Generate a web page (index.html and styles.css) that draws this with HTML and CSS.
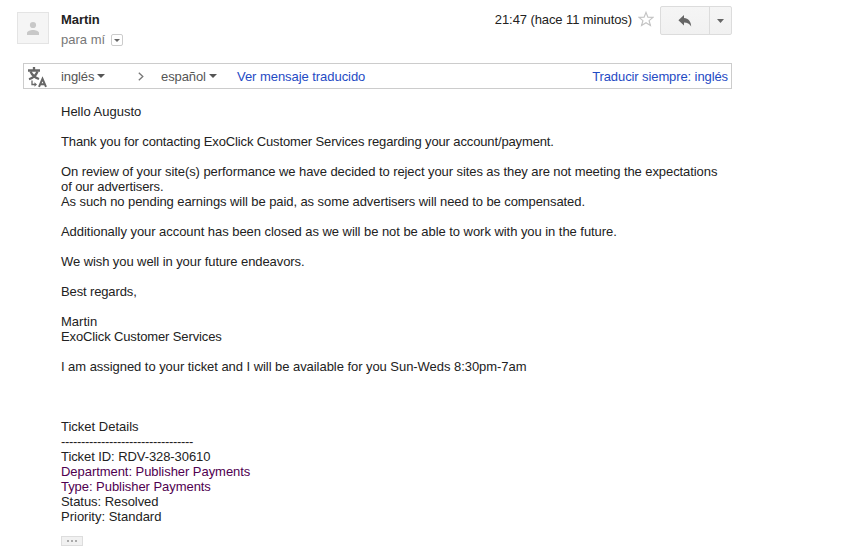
FILE: index.html
```html
<!DOCTYPE html>
<html lang="es">
<head>
    <meta charset="UTF-8">
    <title>Mensaje de Martin</title>
    <link rel="stylesheet" href="styles.css">
</head>
<body>
    <div class="message">
        <div class="header">
            <div class="avatar">
                <svg width="12" height="14" viewBox="0 0 12 14">
                    <circle cx="6" cy="4" r="3.1" fill="#c8c8c8"/>
                    <path d="M0 14V12C0 10 3.5 9 6 9s6 1 6 3v2z" fill="#c8c8c8"/>
                </svg>
            </div>
            <div class="sender">
                <div class="name">Martin</div>
                <div class="recipient">
                    <span>para mí</span>
                    <span class="details"><svg width="6" height="3" viewBox="0 0 6 3"><path d="M0 0h6L3 3z" fill="#666"/></svg></span>
                </div>
            </div>
            <div class="date">21:47 (hace 11 minutos)</div>
            <svg class="star" width="16" height="16" viewBox="0 0 16 16">
                <path d="M8 1.4l1.9 4.7 5.1.3-3.9 3.2 1.3 4.9L8 11.8l-4.4 2.7 1.3-4.9L1 6.4l5.1-.3z" fill="#fff" stroke="#c4c4c4" stroke-width="1.2"/>
            </svg>
            <div class="buttons">
                <button class="reply">
                    <svg width="14" height="12" viewBox="0 0 14 12"><path d="M6 0v3c4.500 .4 7 3.300 7.200 8.500C11.500 8.600 9.500 7.400 6 7.400V10.500L.4 5.200z" fill="#666"/></svg>
                </button>
                <button class="more">
                    <svg width="7" height="4" viewBox="0 0 7 4"><path d="M0 0h7L3.500 4z" fill="#666"/></svg>
                </button>
            </div>
        </div>

        <div class="translate">
            <svg class="translate-icon" width="20" height="22" viewBox="0 0 20 22">
                <g fill="none" stroke="#666">
                    <path d="M0 4.500H12M6 1V4.500" stroke-width="2.300"/>
                    <path d="M2.500 5.500C4 9 7 11.500 11 13M9.500 5.500C8 9.500 5 12 1 13.300" stroke-width="2.200"/>
                    <path d="M4 14.500V18.500H7" stroke-width="1.300"/>
                    <path d="M11 20.800L14.500 12.800 18 20.800M12.300 18.200H16.700" stroke-width="2"/>
                </g>
                <path d="M6.500 16.200l2.500 2.300L6.500 20.800z" fill="#666"/>
            </svg>
            <span class="lang from">inglés<i class="arrow"></i></span>
            <svg class="chevron" width="6" height="9" viewBox="0 0 6 9"><path d="M.8 .8L4.800 4.500 .8 8.200" fill="none" stroke="#777" stroke-width="1.300"/></svg>
            <span class="lang to-lang">español<i class="arrow"></i></span>
            <a class="link">Ver mensaje traducido</a>
            <a class="link always">Traducir siempre: inglés</a>
        </div>

        <div class="body">
            <span class="normal">Hello Augusto</span><br>
            <br>
            <span class="tight">Thank you for contacting ExoClick Customer Services regarding your account/payment.</span><br>
            <br>
            On review of your site(s) performance we have decided to reject your sites as they are not meeting the expectations<br>
            of our advertisers.<br>
            As such no pending earnings will be paid, as some advertisers will need to be compensated.<br>
            <br>
            <span class="loose">Additionally your account has been closed as we will be not be able to work with you in the future.</span><br>
            <br>
            We wish you well in your future endeavors.<br>
            <br>
            <span class="tight">Best regards,</span><br>
            <br>
            <span class="normal">Martin</span><br>
            <span class="tight">ExoClick Customer Services</span><br>
            <br>
            <span class="loose">I am assigned to your ticket and I will be available for you Sun-Weds 8:30pm-7am</span><br>
            <br>
            <br>
            <br>
            <span class="normal">Ticket Details</span><br>
            <span class="rule">---------------------------------</span><br>
            Ticket ID: RDV-328-30610<br>
            <span class="im loose">Department: Publisher Payments<br>
            Type: Publisher Payments</span><br>
            <span class="loose">Status: Resolved</span><br>
            <span class="normal">Priority: Standard</span>
        </div>
        <div class="trimmed"><i></i><i></i><i></i></div>
    </div>
</body>
</html>
```
FILE: styles.css
```css
body {
    margin: 0;
    background: #fff;
    color: #222;
    font-family: "Liberation Sans", Arial, sans-serif;
    font-size: 13px;
    line-height: 15px;
}

.message {
    width: 732px;
}

.header {
    display: flex;
    align-items: flex-start;
    height: 63px;
}

.avatar {
    box-sizing: border-box;
    width: 32px;
    height: 32px;
    margin: 12px 12px 0 17px;
    border: 1px solid #e4e4e4;
    background: #f5f5f5;
    display: flex;
    align-items: center;
    justify-content: center;
}

.sender {
    flex: 1;
    padding-top: 12px;
}

.name {
    font-weight: bold;
    letter-spacing: -0.05px;
}

.recipient {
    display: flex;
    align-items: center;
    margin-top: 5px;
    color: #777;
}

.details {
    box-sizing: border-box;
    width: 12px;
    height: 12px;
    margin: 1px 0 0 6px;
    border: 1px solid #ccc;
    border-radius: 2px;
    display: flex;
    align-items: center;
    justify-content: center;
}

.date {
    padding-top: 12px;
    letter-spacing: -0.09px;
}

.star {
    margin: 11px 6px 0 6px;
}

.buttons {
    display: flex;
    box-sizing: border-box;
    width: 72px;
    height: 29px;
    margin-top: 6px;
    border: 1px solid #dcdcdc;
    border-radius: 2px;
    background: linear-gradient(#f5f5f5, #f1f1f1);
}

.reply,
.more {
    display: flex;
    align-items: center;
    justify-content: center;
    padding: 0;
    border: 0;
    background: none;
}

.reply {
    width: 48px;
}

.more {
    width: 22px;
    border-left: 1px solid #dcdcdc;
}

.translate {
    box-sizing: border-box;
    display: flex;
    align-items: center;
    height: 26px;
    margin-left: 23px;
    padding: 0 3px 0 4px;
    border: 1px solid #ccc;
    color: #555;
}

.translate-icon {
    margin-top: 1px;
}

.lang {
    display: flex;
    align-items: center;
    letter-spacing: -0.1px;
}

.from {
    width: 77px;
    margin-left: 13px;
}

.to-lang {
    width: 76px;
    margin-left: 17px;
}

.arrow {
    margin-left: 3px;
    border: 4px solid transparent;
    border-top-color: #555;
    border-bottom: 0;
}

.link {
    color: #1f4bc4;
    letter-spacing: -0.05px;
}

.always {
    margin-left: auto;
    letter-spacing: -0.1px;
}

.body {
    margin: 15px 0 0 61px;
    white-space: nowrap;
    letter-spacing: -0.08px;
}

.normal {
    letter-spacing: 0;
}

.loose {
    letter-spacing: -0.05px;
}

.tight {
    letter-spacing: -0.13px;
}

.rule {
    letter-spacing: -0.33px;
}

.im {
    color: #500050;
}

.trimmed {
    box-sizing: border-box;
    width: 22px;
    height: 10px;
    margin: 12px 0 0 61px;
    border: 1px solid #ddd;
    background: #f1f1f1;
    display: flex;
    align-items: center;
    justify-content: center;
    gap: 2px;
}

.trimmed i {
    width: 2px;
    height: 2px;
    background: #aaa;
}
```
